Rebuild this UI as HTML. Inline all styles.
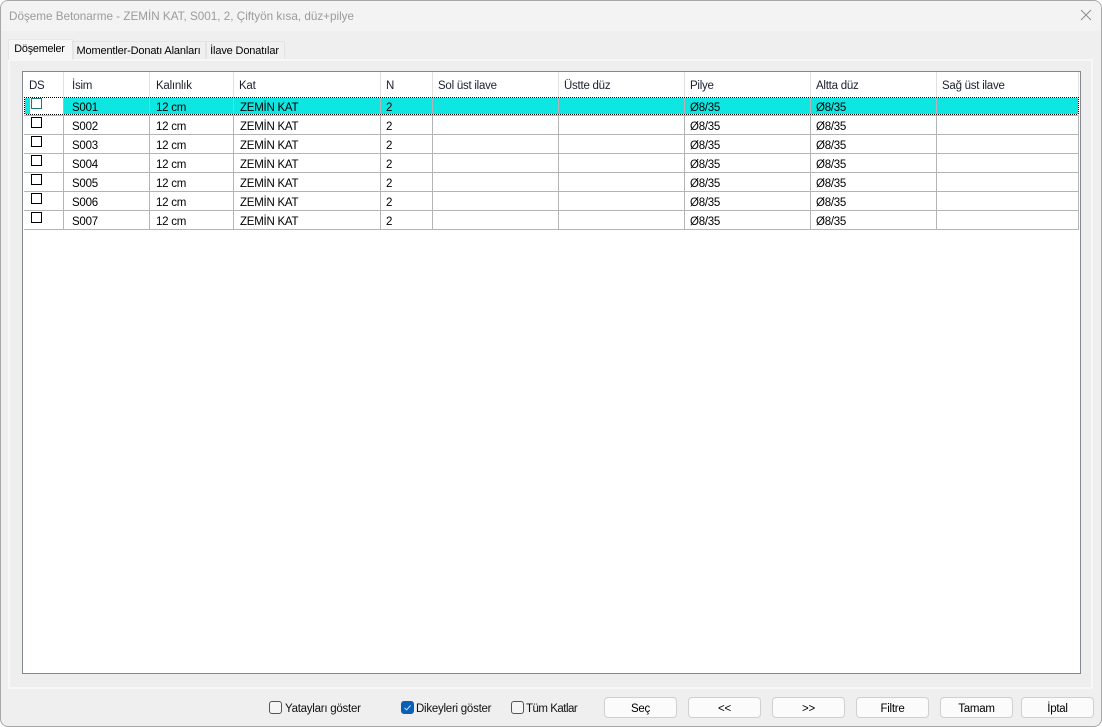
<!DOCTYPE html>
<html><head><meta charset="utf-8">
<style>
html,body{margin:0;padding:0;width:1102px;height:727px;overflow:hidden;background:#fff;}
body{font-family:"Liberation Sans",sans-serif;font-size:11.5px;letter-spacing:-0.25px;color:#000;position:relative;}
div,span{position:absolute;box-sizing:border-box;white-space:nowrap;}
#win{left:0;top:0;width:1102px;height:727px;background:#efefef;border:1px solid #a8a8a8;border-radius:8px;overflow:hidden;}
#tb{left:0;top:0;width:1100px;height:30px;background:#f3f3f3;}
.t{line-height:14px;letter-spacing:0;}
#panel{left:8px;top:59px;width:1085px;height:630px;background:#eeeeee;border:2px solid #f7f7f7;}
.tab{top:41px;height:18px;background:#f0f0f0;border:1px solid #e4e4e4;border-bottom:none;line-height:18px;text-align:center;font-size:11px;letter-spacing:-0.15px;padding-right:2px;}
#active{left:8px;top:39px;width:65px;height:21px;background:#f6f6f6;border:1px solid #e6e6e6;border-bottom:none;text-align:center;line-height:19px;font-size:10.8px;letter-spacing:-0.2px;padding-right:2px;}
#grid{left:22px;top:71px;width:1059px;height:603px;background:#fff;border:1px solid #828790;}
table{position:absolute;left:24px;top:97px;border-spacing:0;border-collapse:separate;table-layout:fixed;width:1055px;}
td{box-sizing:border-box;height:19px;padding:5px 0 0 6px;border-right:1px solid #b4b4b4;border-bottom:1px solid #b4b4b4;font-size:11.5px;line-height:13px;vertical-align:middle;white-space:nowrap;overflow:hidden;color:#000;}
td.n{padding-left:5px;}
tr.s td{background:#0ee6e2;}
.h{top:72px;height:25px;border-right:1px solid #e0e0e0;line-height:28px;padding-left:5px;font-size:11.5px;color:#1a2030;}
.cb{left:31px;width:11px;height:11px;border:1px solid #000;background:#fff;}
.dot{left:24px;width:1055px;height:1px;background-image:linear-gradient(90deg,#000 50%,#fff 50%);background-size:2px 1px;}
.btn{top:697px;width:73px;height:21px;background:#fbfbfb;border:1px solid #d0d0d0;border-radius:4px;text-align:center;line-height:22px;font-size:11.5px;color:#000;}
.c{top:701px;width:13px;height:13px;border:1px solid #555;border-radius:3px;background:#f5f5f5;}
.l{top:702px;line-height:14px;font-size:11.5px;color:#111;}
</style></head>
<body>
<div id="win"><div id="tb"></div></div>
<div class="t" style="left:9px;top:10px;font-size:11.7px;color:#9b9b9b">Döşeme Betonarme - ZEMİN KAT, S001, 2, Çiftyön kısa, düz+pilye</div>
<svg style="position:absolute;left:1080px;top:9px" width="12" height="12" viewBox="0 0 12 12"><path d="M1 1L11 11M11 1L1 11" stroke="#8c8c8c" stroke-width="1" fill="none"/></svg>
<div id="panel"></div>
<div id="active">Döşemeler</div>
<div class="tab" style="left:73px;width:133px">Momentler-Donatı Alanları</div>
<div class="tab" style="left:206px;width:79px">İlave Donatılar</div>
<div id="grid"></div>
<div class="h" style="left:24px;width:40px">DS</div>
<div class="h" style="left:67px;width:83px">İsim</div>
<div class="h" style="left:151px;width:83px">Kalınlık</div>
<div class="h" style="left:234px;width:147px">Kat</div>
<div class="h" style="left:381px;width:52px">N</div>
<div class="h" style="left:433px;width:126px">Sol üst ilave</div>
<div class="h" style="left:559px;width:126px">Üstte düz</div>
<div class="h" style="left:685px;width:126px">Pilye</div>
<div class="h" style="left:811px;width:126px">Altta düz</div>
<div class="h" style="left:937px;width:142px">Sağ üst ilave</div>
<table>
<colgroup><col style="width:40px"><col style="width:86px"><col style="width:84px"><col style="width:147px"><col style="width:52px"><col style="width:126px"><col style="width:126px"><col style="width:126px"><col style="width:126px"><col style="width:142px"></colgroup>
<tr class="s"><td style="background:linear-gradient(90deg,#0ee6e2 6px,#fff 6px)"></td><td style="padding-left:8px">S001</td><td>12 cm</td><td>ZEMİN KAT</td><td class="n">2</td><td></td><td></td><td class="n">Ø8/35</td><td class="n">Ø8/35</td><td></td></tr>
<tr><td></td><td style="padding-left:8px">S002</td><td>12 cm</td><td>ZEMİN KAT</td><td class="n">2</td><td></td><td></td><td class="n">Ø8/35</td><td class="n">Ø8/35</td><td></td></tr>
<tr><td></td><td style="padding-left:8px">S003</td><td>12 cm</td><td>ZEMİN KAT</td><td class="n">2</td><td></td><td></td><td class="n">Ø8/35</td><td class="n">Ø8/35</td><td></td></tr>
<tr><td></td><td style="padding-left:8px">S004</td><td>12 cm</td><td>ZEMİN KAT</td><td class="n">2</td><td></td><td></td><td class="n">Ø8/35</td><td class="n">Ø8/35</td><td></td></tr>
<tr><td></td><td style="padding-left:8px">S005</td><td>12 cm</td><td>ZEMİN KAT</td><td class="n">2</td><td></td><td></td><td class="n">Ø8/35</td><td class="n">Ø8/35</td><td></td></tr>
<tr><td></td><td style="padding-left:8px">S006</td><td>12 cm</td><td>ZEMİN KAT</td><td class="n">2</td><td></td><td></td><td class="n">Ø8/35</td><td class="n">Ø8/35</td><td></td></tr>
<tr><td></td><td style="padding-left:8px">S007</td><td>12 cm</td><td>ZEMİN KAT</td><td class="n">2</td><td></td><td></td><td class="n">Ø8/35</td><td class="n">Ø8/35</td><td></td></tr>
</table>
<div class="dot" style="top:97px"></div>
<div class="dot" style="top:114px"></div>
<div style="left:24px;top:97px;width:1px;height:18px;background-image:linear-gradient(#000 50%,#fff 50%);background-size:1px 2px"></div>
<div style="left:1078px;top:97px;width:1px;height:18px;background-image:linear-gradient(#000 50%,#fff 50%);background-size:1px 2px"></div>
<div class="cb" style="top:98px;border-color:#1a7a78"></div>
<div class="cb" style="top:117px"></div>
<div class="cb" style="top:136px"></div>
<div class="cb" style="top:155px"></div>
<div class="cb" style="top:174px"></div>
<div class="cb" style="top:193px"></div>
<div class="cb" style="top:212px"></div>
<div class="c" style="left:269px"></div>
<div class="l" style="left:285px">Yatayları göster</div>
<div class="c" style="left:401px;background:#0a5fb8;border-color:#0a5fb8"></div>
<svg style="position:absolute;left:401px;top:701px" width="13" height="13" viewBox="0 0 13 13"><path d="M3.5 6.8L5.6 8.8L9.6 4.4" stroke="#dce8f5" stroke-width="1" fill="none"/></svg>
<div class="l" style="left:416px">Dikeyleri göster</div>
<div class="c" style="left:511px"></div>
<div class="l" style="left:526px;letter-spacing:-0.5px">Tüm Katlar</div>
<div class="btn" style="left:604px">Seç</div>
<div class="btn" style="left:688px">&lt;&lt;</div>
<div class="btn" style="left:772px">&gt;&gt;</div>
<div class="btn" style="left:856px">Filtre</div>
<div class="btn" style="left:940px">Tamam</div>
<div class="btn" style="left:1021px">İptal</div>
</body></html>
